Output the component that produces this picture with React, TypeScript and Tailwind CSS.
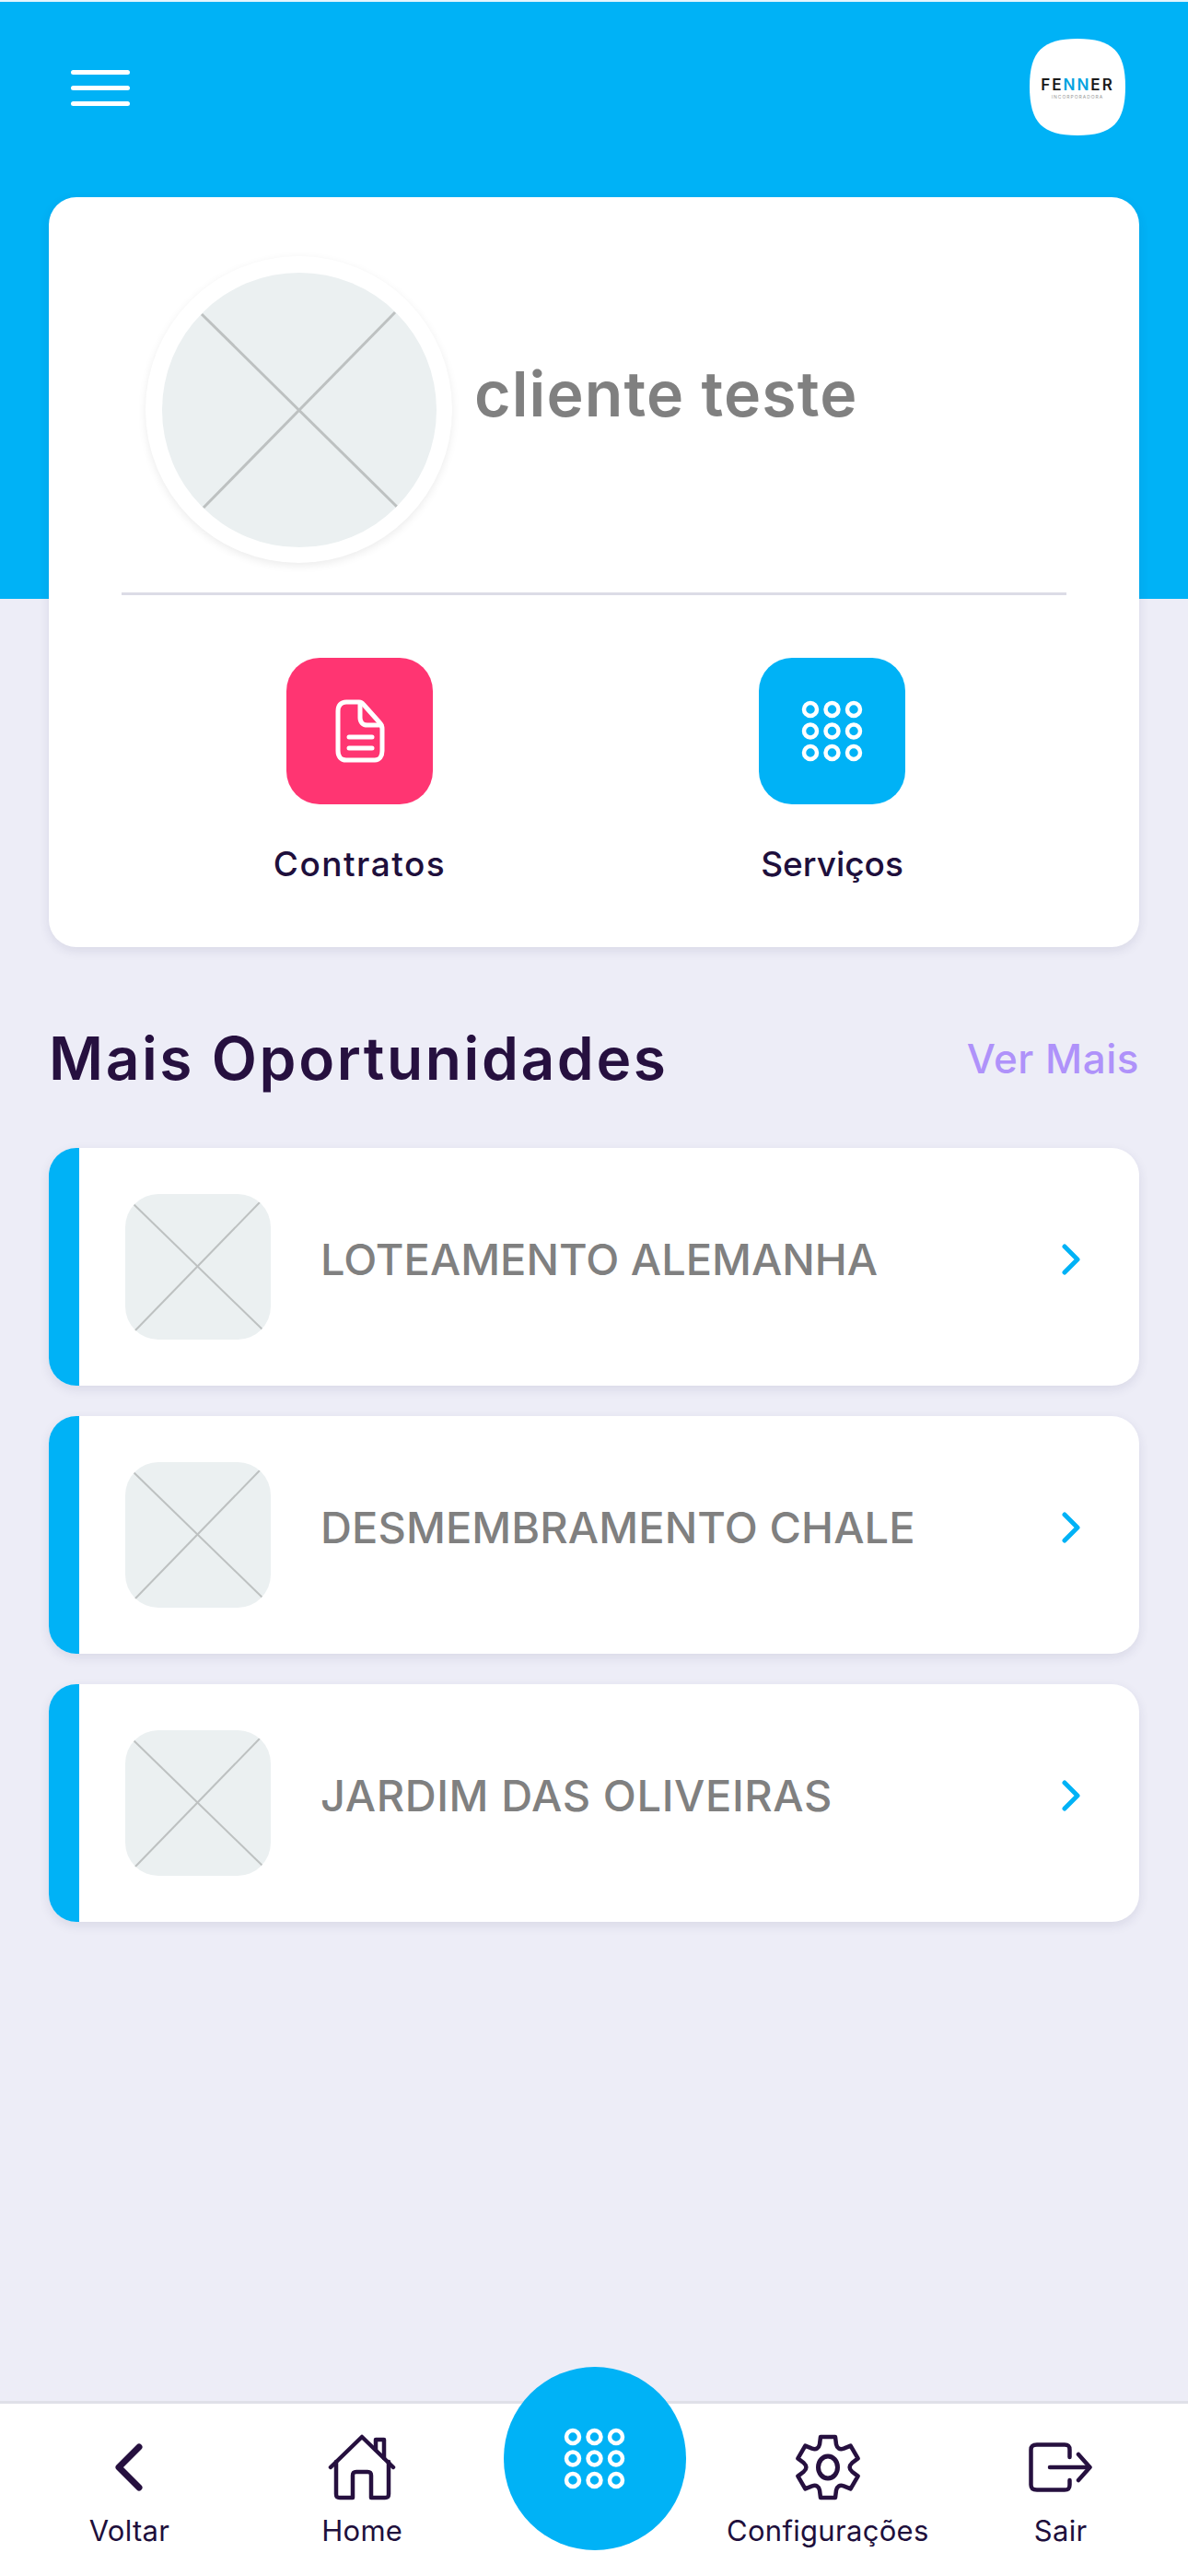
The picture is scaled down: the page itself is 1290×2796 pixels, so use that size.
const opportunities = [
  { title: "LOTEAMENTO ALEMANHA", spacing: "tracking-[0px]" },
  { title: "DESMEMBRAMENTO CHALE", spacing: "tracking-[0.1px]" },
  { title: "JARDIM DAS OLIVEIRAS", spacing: "tracking-[0.6px]" },
];

function DotsIcon() {
  const positions = [12, 35.5, 59];
  return (
    <svg width="71" height="71" viewBox="0 0 71 71" fill="none" stroke="white" strokeWidth="4.5">
      {positions.map((y) =>
        positions.map((x) => <circle key={`${x}-${y}`} cx={x} cy={y} r="7" />)
      )}
    </svg>
  );
}

function DocIcon() {
  return (
    <svg width="54" height="69" viewBox="0 0 54 69" fill="none" stroke="white" strokeWidth="5" strokeLinecap="round" strokeLinejoin="round">
      <path d="M12 3H26C28 3 29.5 4 31 6L48 25C50 27 51 29 51 32V56C51 62 48 66 43 66H12C6 66 3 62 3 56V13C3 7 6 3 12 3Z" />
      <path d="M27 4V20C27 25 30 28 35 28H50" />
      <path d="M15 41H40" />
      <path d="M15 53H40" />
    </svg>
  );
}

function BackIcon() {
  return (
    <svg width="30" height="52" viewBox="0 0 30 52" fill="none" stroke="#26103F" strokeWidth="7" strokeLinecap="round" strokeLinejoin="round">
      <path d="M26 4L4 26L26 48" />
    </svg>
  );
}

function HomeIcon() {
  return (
    <svg width="74" height="72" viewBox="0 0 74 72" fill="none" stroke="#26103F" strokeWidth="4.5" strokeLinecap="round" strokeLinejoin="round">
      <path d="M3 36L37 3L71 36" />
      <path d="M9 30V65C9 68 10 69 13 69H27V45C27 42 28 41 31 41H43C46 41 47 42 47 45V69H62C65 69 66 68 66 65V30" />
      <path d="M52 17V6H61V26" />
    </svg>
  );
}

function GearIcon() {
  const cx = 35;
  const cy = 36;
  const at = (angle: number, radius: number, offset: number) => {
    const a = (angle * Math.PI) / 180;
    const x = cx + radius * Math.cos(a) - offset * Math.sin(a);
    const y = cy + radius * Math.sin(a) + offset * Math.cos(a);
    return `${x.toFixed(1)} ${y.toFixed(1)}`;
  };
  let d = "";
  for (let k = 0; k < 6; k++) {
    const angle = -90 + k * 60;
    d += `${k === 0 ? "M" : "L"}${at(angle, 25, -9)}L${at(angle, 33, -8)}L${at(angle, 33, 8)}L${at(angle, 25, 9)}`;
    d += `Q${at(angle + 30, 21, 0)} ${at(angle + 60, 25, -9)}`;
  }
  return (
    <svg width="70" height="72" viewBox="0 0 70 72" fill="none" stroke="#26103F" strokeWidth="4.5" strokeLinecap="round" strokeLinejoin="round">
      <path d={d + "Z"} />
      <ellipse cx="35" cy="36" rx="10.5" ry="12" strokeWidth="5" />
    </svg>
  );
}

function ExitIcon() {
  return (
    <svg width="69" height="54" viewBox="0 0 69 54" fill="none" stroke="#26103F" strokeWidth="4.5" strokeLinecap="round" strokeLinejoin="round">
      <path d="M44.5 16V8C44.5 4 43 2.5 39 2.5H9C4.5 2.5 2.5 4 2.5 8V46C2.5 50 4.5 51.5 9 51.5H39C43 51.5 44.5 50 44.5 46V41" />
      <path d="M23 27H66" />
      <path d="M54 13L66.5 27L54 41" />
    </svg>
  );
}

function Logo() {
  return (
    <svg width="104" height="105" viewBox="0 0 104 105">
      <path d="M52 0C90 0 104 14 104 52C104 91 90 105 52 105C14 105 0 91 0 52C0 14 14 0 52 0Z" fill="white" />
      <text x="52" y="56" textAnchor="middle" fontSize="17" fontWeight="600" letterSpacing="2" fill="#1a1a1a">
        FE<tspan fill="#00A3E0">NN</tspan>ER
      </text>
      <text x="52" y="65" textAnchor="middle" fontSize="5" letterSpacing="1" fill="#999999">INCORPORADORA</text>
    </svg>
  );
}

function NavItem({ label, children }: { label: string; children: React.ReactNode }) {
  return (
    <div className="flex flex-col items-center pt-[33px]">
      <div className="h-[72px] flex items-center justify-center">{children}</div>
      <span className="mt-[13px] text-[31px] leading-[40px] tracking-[0.3px] text-[#1E0F3C] whitespace-nowrap">{label}</span>
    </div>
  );
}

export default function App() {
  return (
    <div className="relative min-h-[2796px] flex flex-col bg-[#EDEDF7] font-['Inter',sans-serif]">
      {/* Blue header */}
      <header className="h-[650px] bg-[#00B2F6] border-t-2 border-[#E4F5FD] flex items-start justify-between pl-[77px] pr-[68px] pt-[40px]">
        <button className="flex flex-col gap-[12px] mt-[34px]" aria-label="Menu">
          <span className="block w-[64px] h-[5px] rounded-full bg-white"></span>
          <span className="block w-[64px] h-[5px] rounded-full bg-white"></span>
          <span className="block w-[64px] h-[5px] rounded-full bg-white"></span>
        </button>
        <Logo />
      </header>

      {/* Profile card */}
      <section className="-mt-[436px] mx-[53px] h-[814px] rounded-[30px] bg-white shadow-[0_4px_12px_rgba(40,40,90,0.1)]">
        <div className="flex items-center pl-[105px] pt-[64px]">
          <div className="w-[333px] h-[333px] rounded-full bg-white shadow-[0_3px_10px_rgba(0,0,0,0.08)] flex items-center justify-center">
            <svg width="298" height="298" viewBox="0 0 298 298" className="rounded-full bg-[#EBF0F1]" stroke="#BDC1C1" strokeWidth="3">
              <path d="M43 45L255 254" />
              <path d="M253 43L45 255" />
            </svg>
          </div>
          <h2 className="ml-[24px] -mt-[36px] text-[68px] leading-[80px] tracking-[1.1px] font-semibold text-[#808080]">cliente teste</h2>
        </div>
        <div className="mx-[79px] mt-[32px] h-[3px] bg-[#DCDCE6]"></div>
        <div className="ml-[81px] mr-[77px] pt-[68px] grid grid-cols-2">
          <div className="flex flex-col items-center">
            <div className="w-[159px] h-[159px] rounded-[36px] bg-[#FF3572] flex items-center justify-center">
              <DocIcon />
            </div>
            <span className="mt-[41px] text-[37px] leading-[48px] tracking-[1.5px] font-medium text-[#1E0F3C]">Contratos</span>
          </div>
          <div className="flex flex-col items-center">
            <div className="w-[159px] h-[159px] rounded-[36px] bg-[#00B2F6] flex items-center justify-center">
              <DotsIcon />
            </div>
            <span className="mt-[41px] text-[37px] leading-[48px] font-medium text-[#1E0F3C]">Serviços</span>
          </div>
        </div>
      </section>

      {/* Opportunities */}
      <section className="mx-[53px] mt-[81px]">
        <div className="flex items-center justify-between">
          <h2 className="text-[64px] leading-[80px] tracking-[2.6px] font-semibold text-[#26103F]">Mais Oportunidades</h2>
          <a className="text-[44px] leading-[60px] tracking-[0.5px] font-medium text-[#AF92FA]">Ver Mais</a>
        </div>
        <div className="mt-[57px] flex flex-col gap-[33px]">
          {opportunities.map((item) => (
            <div key={item.title} className="h-[258px] rounded-[30px] bg-white overflow-hidden flex items-center shadow-[0_4px_12px_rgba(40,40,90,0.1)]">
              <div className="w-[33px] h-full bg-[#00B2F6]"></div>
              <svg width="158" height="158" viewBox="0 0 158 158" className="ml-[50px] rounded-[36px] bg-[#EBF0F1]" stroke="#BDC1C1" strokeWidth="2">
                <path d="M8 10L149 147" />
                <path d="M147 8L10 149" />
              </svg>
              <span className={`ml-[54px] -mt-[16px] flex-1 text-[47px] leading-[60px] font-medium text-[#808080] ${item.spacing}`}>{item.title}</span>
              <svg width="20" height="34" viewBox="0 0 20 34" fill="none" stroke="#00B2F6" strokeWidth="5" strokeLinecap="round" strokeLinejoin="round" className="mr-[64px] -mt-[16px]">
                <path d="M3 3L17 17L3 31" />
              </svg>
            </div>
          ))}
        </div>
      </section>

      {/* Bottom navigation */}
      <nav className="mt-auto h-[190px] bg-white border-t-[3px] border-[#DFE0E8] grid grid-cols-5 pl-[14px] pr-[12px]">
        <NavItem label="Voltar"><BackIcon /></NavItem>
        <NavItem label="Home"><HomeIcon /></NavItem>
        <div className="flex justify-center">
          <div className="w-[198px] h-[199px] -mt-[40px] rounded-full bg-[#00B2F6] flex items-center justify-center">
            <DotsIcon />
          </div>
        </div>
        <NavItem label="Configurações"><GearIcon /></NavItem>
        <NavItem label="Sair"><ExitIcon /></NavItem>
      </nav>
    </div>
  );
}
